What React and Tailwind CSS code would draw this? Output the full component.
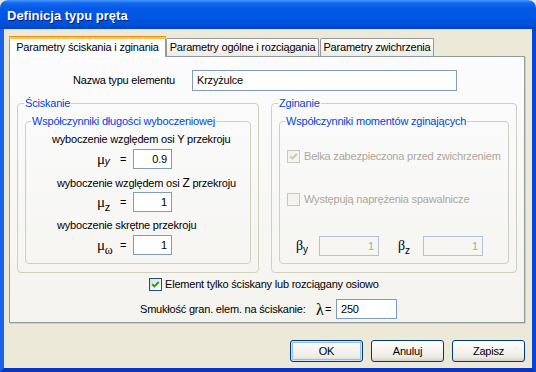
import React from 'react';

const txt = "font-['Liberation_Sans',Arial,sans-serif] text-[11px] leading-[13px] tracking-[-0.2px]";
const sym = "font-['Liberation_Serif','DejaVu_Serif',serif]";

const Check = ({ checked, disabled }) => (
    <div
        className={`w-[13px] h-[13px] border flex items-center justify-center shrink-0 ${
            disabled
                ? 'border-[#CAC8BB] bg-[#F4F3EE]'
                : 'border-[#1C5180] bg-[linear-gradient(135deg,#DCDCD7,#FFFFFF)]'
        }`}
    >
        {checked && (
            <svg width="11" height="11" viewBox="0 0 11 11">
                <path
                    d="M2.2 5.2 L4.4 7.4 L8.8 3"
                    fill="none"
                    stroke={disabled ? '#CAC8BB' : '#21A121'}
                    strokeWidth="2"
                />
            </svg>
        )}
    </div>
);

const Field = ({ value, w, align = 'right', disabled }) => (
    <div
        className={`h-[20px] ${w} border flex items-center px-[4px] ${
            align === 'right' ? 'justify-end' : 'justify-start'
        } ${disabled ? 'border-[#B4C2D3] text-[#ACA899] bg-transparent' : 'border-[#7F9DB9] bg-white text-black'}`}
    >
        {value}
    </div>
);

const Button = ({ children, primary }) => (
    <div
        className={`w-[73px] h-[22px] rounded-[3px] border border-[#003C74] flex items-center justify-center text-black bg-[linear-gradient(180deg,#FFFFFF_0%,#F4F3EE_50%,#ECEBE6_80%,#D6D0C5_100%)] ${
            primary ? 'shadow-[inset_0_0_0_1px_#CEE2FC,inset_0_0_0_2px_#9DBCF0]' : ''
        }`}
    >
        {children}
    </div>
);

export default function App() {
    return (
        <div className={`${txt} w-[536px] h-[372px] flex flex-col bg-[#ECE9D8] text-black overflow-hidden`}>
            {/* title bar */}
            <div className="h-[29px] shrink-0 rounded-t-[8px] flex items-center pl-[7px] bg-[linear-gradient(180deg,#4C9BFF_0%,#1468F0_10%,#0458E6_30%,#0055E3_60%,#0050DA_85%,#0043C4_100%)]">
                <span className="font-['Liberation_Sans',Arial,sans-serif] font-bold text-[13px] tracking-normal text-white [text-shadow:1px_1px_0_#0A1E7A] mt-[2px]">
                    Definicja typu pręta
                </span>
            </div>

            <div className="flex-1 flex flex-col border-l-[4px] border-r-[4px] border-b-[4px] border-l-[#1B62EA] border-r-[#0846D6] border-b-[#0733C8]">
                {/* tabs */}
                <div className="h-[20px] mt-[7px] ml-[5px] flex items-end relative z-10">
                    <div className="w-[157px] h-[21px] -mb-px bg-white border-l border-r border-[#919B9C] flex flex-col">
                        <div className="h-[3px] bg-[#FFC83C] border-t border-[#E68B2C] -mx-px rounded-t-[2px]" />
                        <div className="flex-1 flex items-center justify-center pb-[1px]">Parametry ściskania i zginania</div>
                    </div>
                    <div className="w-[153px] h-[18px] border border-b-0 border-[#919B9C] rounded-t-[2px] bg-[linear-gradient(180deg,#FFFFFF,#ECEBE6)] flex items-center justify-center">
                        Parametry ogólne i rozciągania
                    </div>
                    <div className="w-[114px] ml-[1px] h-[18px] border border-b-0 border-[#919B9C] rounded-t-[2px] bg-[linear-gradient(180deg,#FFFFFF,#ECEBE6)] flex items-center justify-center">
                        Parametry zwichrzenia
                    </div>
                </div>

                {/* panel */}
                <div className="ml-[5px] w-[516px] h-[267px] border border-[#919B9C] shadow-[1px_1px_0_#D0CEBF] bg-[linear-gradient(180deg,#FCFCFE,#F4F3EE)] flex flex-col">
                    <div className="mt-[13px] flex items-center">
                        <div className="w-[182px] pl-[63px]">Nazwa typu elementu</div>
                        <div className="h-[21px] w-[265px] border border-[#7F9DB9] bg-white flex items-center pl-[4px]">Krzyżulce</div>
                    </div>

                    <div className="mt-[6px] flex items-start">
                        {/* Ściskanie */}
                        <fieldset className="ml-[7px] w-[242px] h-[176px] border border-[#D0D0BF] rounded-[4px]">
                            <legend className="ml-[6px] px-[1px] text-[#0046D5]">Ściskanie</legend>
                            <fieldset className="mt-[5px] ml-[7px] w-[226px] h-[149px] border border-[#D0D0BF] rounded-[4px]">
                                <legend className="ml-[5px] px-[1px] text-[#0046D5]">Współczynniki długości wyboczeniowej</legend>
                                <div className="flex flex-col">
                                    <div className="mt-[5px] pl-[26px]">wyboczenie względem osi Y przekroju</div>
                                    <div className="mt-[3px] h-[20px] flex items-center pl-[71px]">
                                        <div className="w-[23px] flex items-end">
                                            <span className={`${sym} text-[15px] leading-[14px]`}>μ</span>
                                            <span className="text-[10px] leading-[10px] italic mb-[-1px]">y</span>
                                        </div>
                                        <div className="w-[13px]">=</div>
                                        <Field value="0.9" w="w-[39px]" />
                                    </div>
                                    <div className="mt-[8px] pl-[31px]">wyboczenie względem osi <span className="text-[12px]">Z</span> przekroju</div>
                                    <div className="mt-[2px] h-[20px] flex items-center pl-[71px]">
                                        <div className="w-[23px] flex items-end">
                                            <span className={`${sym} text-[15px] leading-[14px]`}>μ</span>
                                            <span className="text-[11px] leading-[10px] mb-[-3px]">z</span>
                                        </div>
                                        <div className="w-[13px]">=</div>
                                        <Field value="1" w="w-[39px]" />
                                    </div>
                                    <div className="mt-[7px] pl-[31px]">wyboczenie skrętne przekroju</div>
                                    <div className="mt-[3px] h-[20px] flex items-center pl-[71px]">
                                        <div className="w-[23px] flex items-end">
                                            <span className={`${sym} text-[15px] leading-[14px]`}>μ</span>
                                            <span className={`${sym} text-[12px] leading-[10px] mb-[-3px]`}>ω</span>
                                        </div>
                                        <div className="w-[13px]">=</div>
                                        <Field value="1" w="w-[39px]" />
                                    </div>
                                </div>
                            </fieldset>
                        </fieldset>

                        {/* Zginanie */}
                        <fieldset className="ml-[12px] w-[246px] h-[176px] border border-[#D0D0BF] rounded-[4px]">
                            <legend className="ml-[6px] px-[1px] text-[#0046D5]">Zginanie</legend>
                            <fieldset className="mt-[5px] ml-[7px] w-[230px] h-[149px] border border-[#D0D0BF] rounded-[4px]">
                                <legend className="ml-[5px] px-[1px] text-[#0046D5]">Współczynniki momentów zginających</legend>
                                <div className="flex flex-col text-[#ACA899]">
                                    <div className="mt-[22px] pl-[7px] flex items-center">
                                        <Check checked disabled />
                                        <span className="ml-[4px]">Belka zabezpieczona przed zwichrzeniem</span>
                                    </div>
                                    <div className="mt-[30px] pl-[7px] flex items-center">
                                        <Check disabled />
                                        <span className="ml-[4px]">Występują naprężenia spawalnicze</span>
                                    </div>
                                    <div className="mt-[30px] h-[20px] pl-[16px] flex items-center">
                                        <div className="w-[23px] flex items-end text-black">
                                            <span className={`${sym} text-[14px] leading-[14px]`}>β</span>
                                            <span className="text-[10px] leading-[10px] mb-[-2px]">y</span>
                                        </div>
                                        <Field value="1" w="w-[60px]" disabled />
                                        <div className="ml-[19px] w-[25px] flex items-end text-black">
                                            <span className={`${sym} text-[14px] leading-[14px]`}>β</span>
                                            <span className="text-[10px] leading-[10px] mb-[-3px]">z</span>
                                        </div>
                                        <Field value="1" w="w-[60px]" disabled />
                                    </div>
                                </div>
                            </fieldset>
                        </fieldset>
                    </div>

                    <div className="mt-[5px] pl-[139px] flex items-center">
                        <Check checked />
                        <span className="ml-[3px]">Element tylko ściskany lub rozciągany osiowo</span>
                    </div>
                    <div className="mt-[8px] h-[20px] pl-[130px] flex items-center">
                        <div className="w-[176px]">Smukłość gran. elem. na ściskanie:</div>
                        <span className={`${sym} w-[9px] text-[16px] leading-[15px]`}>λ</span>
                        <div className="w-[11px]">=</div>
                        <Field value="250" w="w-[61px]" align="left" />
                    </div>
                </div>

                {/* buttons */}
                <div className="mt-[17px] pr-[7px] flex justify-end gap-[8px]">
                    <Button primary>OK</Button>
                    <Button>Anuluj</Button>
                    <Button>Zapisz</Button>
                </div>
            </div>
        </div>
    );
}
